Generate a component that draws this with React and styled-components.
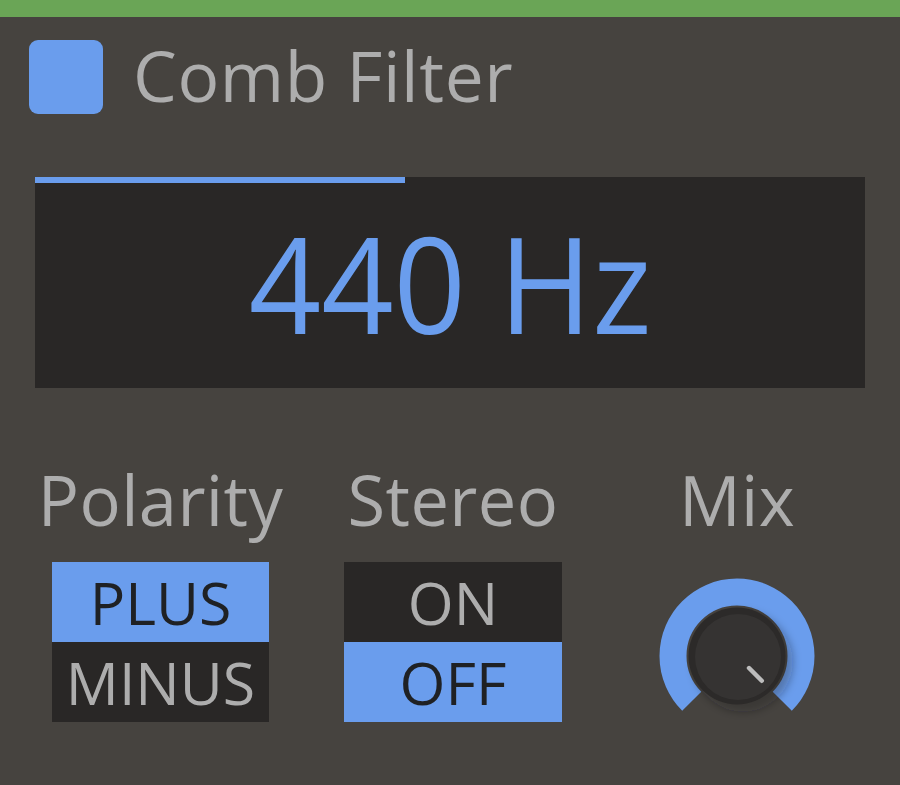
import React from 'react';
import styled, { createGlobalStyle } from 'styled-components';

const GlobalStyle = createGlobalStyle`
  html, body {
    margin: 0;
    padding: 0;
    background: #46433f;
  }
  body {
    font-family: 'Open Sans', 'Noto Sans', sans-serif;
  }
`;

const BLUE = '#6a9ded';
const GRAY = '#adadad';
const DARK = '#292726';

const Panel = styled.div`
  width: 900px;
  height: 785px;
  background: #46433f;
  display: flex;
  flex-direction: column;
  overflow: hidden;
`;

const TopStrip = styled.div`
  height: 17px;
  background: #6aa556;
  flex-shrink: 0;
`;

const Header = styled.div`
  display: flex;
  align-items: center;
  gap: 30px;
  margin: 23px 0 0 29px;
  height: 74px;
`;

const PowerToggle = styled.div`
  width: 74px;
  height: 74px;
  border-radius: 9px;
  background: ${BLUE};
`;

const Title = styled.div`
  font-size: 69.5px;
  line-height: 74px;
  letter-spacing: 0.6px;
  color: ${GRAY};
  margin-top: -5px;
`;

const Display = styled.div`
  margin: 63px 0 0 35px;
  width: 830px;
  height: 211px;
  background: ${DARK};
  display: flex;
  flex-direction: column;
`;

const Progress = styled.div`
  height: 6px;
  width: ${(p) => p.$value * 100}%;
  background: ${BLUE};
  flex-shrink: 0;
`;

const Readout = styled.div`
  flex: 1;
  display: flex;
  align-items: center;
  justify-content: center;
  padding-bottom: 8px;
`;

const ReadoutText = styled.span`
  display: inline-block;
  color: ${BLUE};
  font-size: 134px;
  line-height: 134px;
  letter-spacing: 0px;
  transform: scaleX(0.945);
  white-space: nowrap;
`;

const Controls = styled.div`
  display: flex;
  margin: 77px 0 0 35px;
`;

const Column = styled.div`
  width: ${(p) => p.$width}px;
  margin-left: ${(p) => p.$offset || 0}px;
  display: flex;
  flex-direction: column;
  align-items: center;
`;

const Label = styled.div`
  font-size: 68.6px;
  line-height: 70px;
  letter-spacing: 0.4px;
  color: ${GRAY};
  white-space: nowrap;
`;

const Switch = styled.div`
  margin-top: 27px;
  width: ${(p) => p.$width}px;
  display: flex;
  flex-direction: column;
`;

const Option = styled.div`
  height: 80px;
  display: flex;
  align-items: center;
  justify-content: center;
  font-size: 59px;
  line-height: 80px;
  background: ${(p) => (p.$active ? BLUE : DARK)};
  color: ${(p) => (p.$active ? '#1f2124' : GRAY)};
`;

const KnobSvg = styled.svg`
  margin-top: 41px;
  display: block;
`;

const polar = (r, deg) => {
  const a = (deg * Math.PI) / 180;
  return [80 + r * Math.sin(a), 80 - r * Math.cos(a)];
};

const Knob = ({ value }) => {
  const r = 64;
  const start = polar(r, -135);
  const endDeg = -135 + 270 * value;
  const end = polar(r, endDeg);
  const large = endDeg - -135 > 180 ? 1 : 0;
  const p1 = polar(17, endDeg);
  const p2 = polar(35, endDeg);
  return (
    <KnobSvg width="160" height="160" viewBox="0 0 160 160">
      <defs>
        <filter id="knobShadow" x="-50%" y="-50%" width="200%" height="200%">
          <feGaussianBlur stdDeviation="4" />
        </filter>
      </defs>
      <path
        d={`M ${start[0]} ${start[1]} A ${r} ${r} 0 ${large} 1 ${end[0]} ${end[1]}`}
        fill="none"
        stroke={BLUE}
        strokeWidth="27"
      />
      <circle cx="86" cy="86" r="50" fill="rgba(20,20,30,0.3)" filter="url(#knobShadow)" />
      <circle cx="80" cy="80" r="48.5" fill="#2c2a29" />
      <circle cx="81" cy="81" r="43" fill="#353332" />
      <line
        x1={p1[0]}
        y1={p1[1]}
        x2={p2[0]}
        y2={p2[1]}
        stroke="#bdbdbd"
        strokeWidth="4.5"
        strokeLinecap="round"
      />
    </KnobSvg>
  );
};

const App = () => {
  return (
    <Panel>
      <GlobalStyle />
      <TopStrip />
      <Header>
        <PowerToggle />
        <Title>Comb Filter</Title>
      </Header>
      <Display>
        <Progress $value={0.446} />
        <Readout>
          <ReadoutText>440 Hz</ReadoutText>
        </Readout>
      </Display>
      <Controls>
        <Column $width={251}>
          <Label>Polarity</Label>
          <Switch $width={217}>
            <Option $active>PLUS</Option>
            <Option>MINUS</Option>
          </Switch>
        </Column>
        <Column $width={218} $offset={58}>
          <Label>Stereo</Label>
          <Switch $width={218}>
            <Option>ON</Option>
            <Option $active>OFF</Option>
          </Switch>
        </Column>
        <Column $width={160} $offset={95}>
          <Label>Mix</Label>
          <Knob value={1} />
        </Column>
      </Controls>
    </Panel>
  );
};

export default App;
